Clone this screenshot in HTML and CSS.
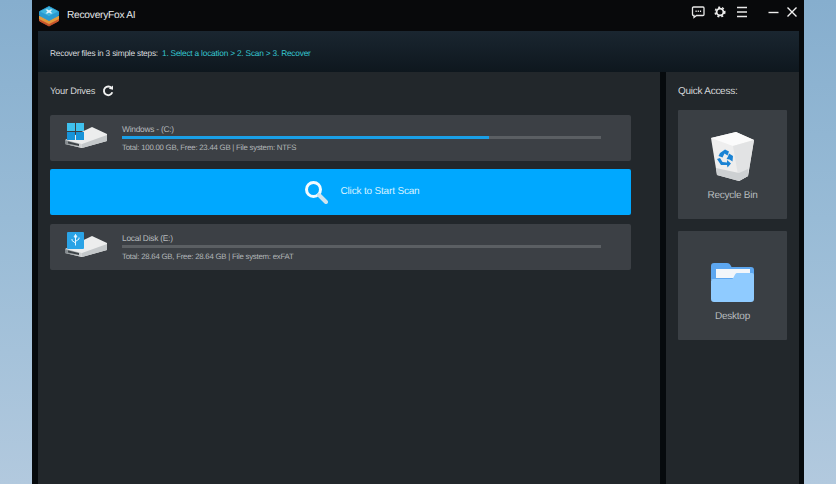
FILE: index.html
```html
<!DOCTYPE html>
<html lang="en">
<head>
<meta charset="utf-8">
<title>RecoveryFox AI</title>
<link rel="stylesheet" href="styles.css">
</head>
<body>
<div class="window">
  <header class="titlebar">
    <svg class="logo" viewBox="0 0 22 22" width="22" height="22">
      <path d="M1.500 13 11 9l9.500 4V16L11 21 1.500 16Z" fill="#c9562d" stroke="#c9562d" stroke-linejoin="round"/>
      <path d="M1 11V14L11 19 21 14V11Z" fill="#e39a3d"/>
      <path d="M1.500 6.500 11 1.500l9.500 5V10.500L11 15.500 1.500 10.500Z" fill="#2a9ad0" stroke="#2a9ad0" stroke-linejoin="round"/>
      <path d="M2 6.500 11 2l9 4.500L11 11Z" fill="#3fb6e0"/>
      <path d="M7.500 4.500h2L11 5.500l1.500-1h2L12.500 6.500l2 2h-2L11 7.500 9.500 8.500h-2L9.500 6.500Z" fill="#e8f4fa"/>
    </svg>
    <span class="app-name">RecoveryFox AI</span>
    <div class="tools">
      <svg viewBox="0 0 14 14" width="14" height="14"><path d="M2.500 2h9.500a1 1 0 0 1 1 1v6.500a1 1 0 0 1-1 1H5.500L3 12.500v-2h-.500a1 1 0 0 1-1-1V3a1 1 0 0 1 1-1Z" fill="none" stroke="#e8e8e8" stroke-width="1.300"/><path d="M4.500 6.200h1.200M6.700 6.200h1.200M8.900 6.200h1.200" stroke="#e8e8e8" stroke-width="1.400"/></svg>
      <svg viewBox="0 0 14 14" width="14" height="14"><circle cx="7" cy="7" r="3.400" fill="none" stroke="#ececec" stroke-width="1.800"/><circle cx="7" cy="7" r="4.800" fill="none" stroke="#ececec" stroke-width="1.500" stroke-dasharray="2 2.030"/></svg>
      <svg viewBox="0 0 14 14" width="14" height="14"><path d="M2 2.500h10M2 7h10M2 11.500h10" stroke="#e8e8e8" stroke-width="1.300"/></svg>
    </div>
    <div class="win-controls">
      <svg viewBox="0 0 12 12" width="12" height="12"><path d="M.5 6.500h10" stroke="#eeeeee" stroke-width="1.400"/></svg>
      <svg viewBox="0 0 12 12" width="12" height="12"><path d="M1.500 1.500 10.500 10.500M10.500 1.500 1.500 10.500" stroke="#f2f2f2" stroke-width="1.400"/></svg>
    </div>
  </header>
  <div class="inner">
    <div class="steps">
      <span class="steps-lead">Recover files in 3 simple steps:</span>
      <span class="steps-list">1. Select a location &gt; 2. Scan &gt; 3. Recover</span>
    </div>
    <div class="columns">
      <main class="drives">
        <div class="drives-head">
          <span>Your Drives</span>
          <svg viewBox="0 0 12 12" width="12" height="12"><path d="M9.700 3.300A4.300 4.300 0 1 0 10.300 7.300" fill="none" stroke="#f0f0f0" stroke-width="1.900"/><path d="M6.800 3.800 11 4.800V.6Z" fill="#f0f0f0"/></svg>
        </div>
        <section class="drive">
          <svg class="drive-icon" viewBox="0 0 44 28" width="44" height="28">
            <use href="#disk"/>
            <path d="M2 0h8v8H2ZM11 0h8v8h-8Z" fill="#3fc1ee"/>
            <path d="M2 9h8v8H2ZM11 9h8v8h-8Z" fill="#1793d8"/>
          </svg>
          <div class="drive-info">
            <div class="drive-name">Windows - (C:)</div>
            <div class="bar"><div class="bar-fill" style="width:76.600%"></div></div>
            <div class="drive-meta">Total: 100.00 GB, Free: 23.44 GB | File system: NTFS</div>
          </div>
        </section>
        <button class="scan" type="button">
          <svg viewBox="0 0 24 24" width="24" height="24"><circle cx="9.500" cy="9.500" r="7" fill="none" stroke="#f3fbff" stroke-width="3"/><path d="M15 15 22 22" stroke="#cfe4ee" stroke-width="4" stroke-linecap="round"/></svg>
          <span class="scan-label">Click to Start Scan</span>
        </button>
        <section class="drive">
          <svg class="drive-icon" viewBox="0 0 44 28" width="44" height="28">
            <use href="#disk"/>
            <rect x="2" y="0" width="17" height="17" rx="1" fill="#2aa3e6"/>
            <path d="M10.500 2.500v11M10.500 2.500 9 5h3ZM10.500 11 7 8.500V7M10.500 9.500l3.500-2.500V5.500" fill="none" stroke="#e6f6ff" stroke-width="1"/>
          </svg>
          <div class="drive-info">
            <div class="drive-name">Local Disk (E:)</div>
            <div class="bar"></div>
            <div class="drive-meta">Total: 28.64 GB, Free: 28.64 GB | File system: exFAT</div>
          </div>
        </section>
      </main>
      <aside class="quick">
        <div class="quick-title">Quick Access:</div>
        <div class="tile">
          <svg viewBox="0 0 43 49" width="43" height="49">
            <path d="M0 6 25 0 43 8 37 44 28 49 6 43Z" fill="#eeeeee"/>
            <path d="M0 6 25 0 43 8 22 14Z" fill="#fbfbfb"/>
            <path d="M22 14 43 8 37 44 28 49Z" fill="#e2e3e4"/>
            <path d="M5 36 28 41 37 37 37 44 28 49 6 43Z" fill="#cdd0d2"/>
            <path d="M9 21 14 17.500 18 19.500 16.500 23.500 13.500 21.500 11.500 25.500 7.500 24Z" fill="#1a83d4"/>
            <path d="M18 21.500 22 24 21.500 29.500 18.500 27.500 15.500 27 17 24.500Z" fill="#1a83d4"/>
            <path d="M6 27 9 26 11.500 30 16 30.500 16 28 20 31.500 16.500 35.500 16 33 10 33Z" fill="#1a83d4"/>
          </svg>
          <span>Recycle Bin</span>
        </div>
        <div class="tile">
          <svg viewBox="0 0 43 39" width="43" height="39">
            <path d="M0 3a3 3 0 0 1 3-3h13c2 0 3 1 4 3l.500 1H40a3 3 0 0 1 3 3v10H0Z" fill="#5da7f0"/>
            <path d="M5 6h34v9H5Z" fill="#f2f6fa"/>
            <path d="M2 16h19c2 0 2.500-6 5-6h15a2 2 0 0 1 2 2v24a3 3 0 0 1-3 3H3a3 3 0 0 1-3-3V18a2 2 0 0 1 2-2Z" fill="#8fcbff"/>
          </svg>
          <span>Desktop</span>
        </div>
      </aside>
    </div>
  </div>
</div>
<svg class="defs" width="0" height="0">
  <defs>
    <linearGradient id="disk-side" x1="0" y1="0" x2="1" y2="0">
      <stop offset="0" stop-color="#7f8589"/>
      <stop offset="1" stop-color="#d6d8d9"/>
    </linearGradient>
    <g id="disk">
      <path d="M0 17 27 4 42 11V18L17 25 0 21Z" fill="#eceded"/>
      <path d="M0 17 17 21V25L0 21Z" fill="url(#disk-side)"/>
      <path d="M17 21 42 12V18L17 25Z" fill="#c4c8ca"/>
      <path d="M3 18.500 14 21V23L3 20.500Z" fill="#3d4347"/>
    </g>
  </defs>
</svg>
</body>
</html>
```
FILE: styles.css
```css
* { box-sizing: border-box; }

html, body { height: 100%; }

body {
  margin: 0;
  height: 484px;
  overflow: hidden;
  padding: 0 32px;
  background: linear-gradient(180deg, #86aece 0%, #98bbd6 45%, #b2c9de 100%);
  font-family: "Liberation Sans", Arial, sans-serif;
  text-rendering: geometricPrecision;
}

.defs { display: block; }

.window {
  width: 772px;
  height: 484px;
  background: #060a0d;
  display: flex;
  flex-direction: column;
  padding: 0 5px 0 6px;
}

.titlebar {
  height: 31px;
  flex: none;
  display: flex;
  align-items: center;
  margin: 0 -5px 0 -6px;
  padding: 0 0 0 6px;
  background: #08090b;
}

.logo { flex: none; }

.app-name {
  margin-left: 7px;
  font-size: 10.200px;
  letter-spacing: -0.25px;
  color: #e6e8ea;
}

.tools {
  margin-left: auto;
  padding-bottom: 7px;
  display: flex;
  gap: 8px;
  align-items: center;
}

.win-controls {
  margin-left: 19px;
  margin-right: 6px;
  padding-bottom: 7px;
  display: flex;
  gap: 6px;
  align-items: center;
}

.inner {
  flex: 1;
  min-height: 0;
  display: flex;
  flex-direction: column;
}

.steps {
  height: 41px;
  flex: none;
  display: flex;
  align-items: center;
  gap: 4px;
  padding: 2px 12px 0;
  font-size: 8.300px;
  letter-spacing: -0.2px;
  background: linear-gradient(180deg, #1a2630 0%, #0e171e 100%);
}

.steps-lead { color: #d8dcdf; }
.steps-list { color: #36c6d0; }

.columns {
  flex: 1;
  min-height: 0;
  display: flex;
  gap: 6px;
}

.drives {
  width: 622px;
  flex: none;
  background: #22272b;
  padding: 0 29px 0 12px;
}

.drives-head {
  height: 43px;
  display: flex;
  align-items: center;
  gap: 7px;
  padding-bottom: 6px;
  font-size: 9.300px;
  letter-spacing: -0.24px;
  color: #d4d6d8;
}

.drive {
  height: 46px;
  display: flex;
  align-items: center;
  background: #3c4045;
  border-radius: 2px;
  padding-left: 15px;
}

.drive-icon { flex: none; margin-top: -2px; }

.drive-info {
  margin-left: 13px;
  width: 479px;
}

.drive-name {
  padding-top: 1px;
  font-size: 8.400px;
  letter-spacing: -0.25px;
  line-height: 11px;
  color: #b6babd;
}

.bar {
  height: 2.500px;
  margin-top: 1px;
  background: #5b5f63;
}

.bar-fill {
  height: 100%;
  background: #1a9fe6;
}

.drive-meta {
  margin-top: 3px;
  font-size: 7.800px;
  letter-spacing: -0.23px;
  line-height: 11px;
  color: #b2b6b9;
}

.scan {
  width: 100%;
  height: 46px;
  margin: 8px 0 9px;
  border: 0;
  border-radius: 2px;
  background: #00a8ff;
  color: #d8f2ff;
  font: 10px "Liberation Sans", Arial, sans-serif;
  letter-spacing: -0.17px;
  text-rendering: geometricPrecision;
  display: flex;
  align-items: center;
  justify-content: center;
  gap: 12px;
  padding: 0 0 0 43px;
}

.scan-label { margin-bottom: 1px; }

.quick {
  flex: 1;
  min-width: 0;
  background: #22272b;
  padding: 0 12px;
}

.quick-title {
  height: 38px;
  display: flex;
  align-items: center;
  font-size: 10px;
  letter-spacing: -0.26px;
  color: #d6d8da;
}

.tile {
  height: 109px;
  margin-bottom: 12px;
  background: #3a3f44;
  border-radius: 1px;
  display: flex;
  flex-direction: column;
  align-items: center;
  justify-content: flex-end;
  padding-bottom: 18px;
  gap: 9px;
  font-size: 10px;
  letter-spacing: -0.26px;
  line-height: 11px;
  color: #b8bcbf;
}
```
